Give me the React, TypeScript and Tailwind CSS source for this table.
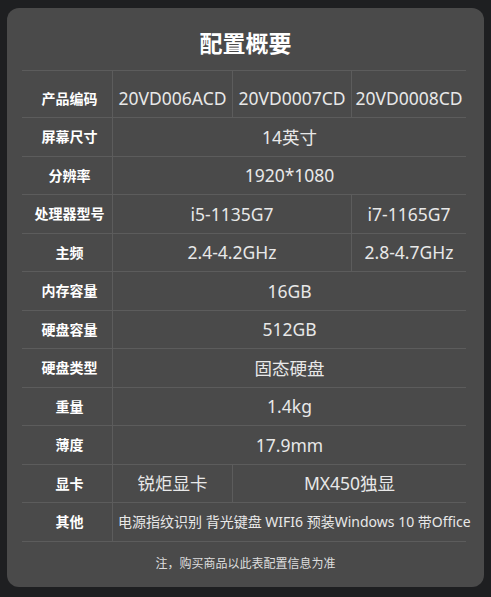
type Cell = { text: string; span: number; line?: boolean };

const rows: { label: string; cells: Cell[] }[] = [
  {
    label: "产品编码",
    cells: [
      { text: "20VD006ACD", span: 1, line: true },
      { text: "20VD0007CD", span: 1, line: true },
      { text: "20VD0008CD", span: 1 },
    ],
  },
  { label: "屏幕尺寸", cells: [{ text: "14英寸", span: 3 }] },
  { label: "分辨率", cells: [{ text: "1920*1080", span: 3 }] },
  {
    label: "处理器型号",
    cells: [
      { text: "i5-1135G7", span: 2, line: true },
      { text: "i7-1165G7", span: 1 },
    ],
  },
  {
    label: "主频",
    cells: [
      { text: "2.4-4.2GHz", span: 2, line: true },
      { text: "2.8-4.7GHz", span: 1 },
    ],
  },
  { label: "内存容量", cells: [{ text: "16GB", span: 3 }] },
  { label: "硬盘容量", cells: [{ text: "512GB", span: 3 }] },
  { label: "硬盘类型", cells: [{ text: "固态硬盘", span: 3 }] },
  { label: "重量", cells: [{ text: "1.4kg", span: 3 }] },
  { label: "薄度", cells: [{ text: "17.9mm", span: 3 }] },
  {
    label: "显卡",
    cells: [
      { text: "锐炬显卡", span: 1, line: true },
      { text: "MX450独显", span: 2 },
    ],
  },
];

const spanClass: Record<number, string> = {
  1: "col-span-1",
  2: "col-span-2",
  3: "col-span-3",
};

const App = () => {
  return (
    <div
      className="w-full h-[597px] bg-[#1e1f21] pt-2 pl-[7px]"
      style={{ fontFamily: '"Noto Sans", "Noto Sans CJK SC", sans-serif' }}
    >
      <div className="w-[477px] h-[579px] rounded-[12px] bg-[#4a4a4a] flex flex-col">
        <div className="h-[62px] pt-2 flex items-center justify-center">
          <h1 className="text-[23px] font-bold text-white leading-none">配置概要</h1>
        </div>

        <div className="ml-[15px] w-[444px] border-t border-[#5c5c5c] text-[#e8e8e8]">
          {rows.map((r, i) => (
            <div
              key={r.label}
              className={`grid grid-cols-[91px_120px_119px_114px] border-b border-[#5c5c5c] ${
                i === 0 ? "h-[47px] pt-[9px]" : "h-[38.5px]"
              }`}
            >
              <div className="border-r border-[#5c5c5c] pl-[5px] flex items-center justify-center text-[14px] font-bold text-white -mt-[9px] pt-[9px] box-content">
                {r.label}
              </div>
              {r.cells.map((c, j) => (
                <div
                  key={j}
                  className={`${spanClass[c.span]} ${
                    c.line ? "border-r border-[#5c5c5c]" : ""
                  } ${i === 0 ? "-mt-[9px] pt-[9px] box-content" : ""} flex items-center justify-center text-[17.5px] whitespace-nowrap`}
                >
                  {c.text}
                </div>
              ))}
            </div>
          ))}
          <div className="grid grid-cols-[91px_353px] h-[38.5px] border-b border-[#5c5c5c]">
            <div className="border-r border-[#5c5c5c] pl-[5px] flex items-center justify-center text-[14px] font-bold text-white">
              其他
            </div>
            <div className="flex items-center pl-[5px] text-[14px] whitespace-nowrap">
              电源指纹识别 背光键盘 WIFI6 预装Windows 10 带Office
            </div>
          </div>
        </div>

        <div className="h-[44px] flex items-center justify-center text-[12px] text-[#dedede]">
          注，购买商品以此表配置信息为准
        </div>
      </div>
    </div>
  );
};

export default App;
